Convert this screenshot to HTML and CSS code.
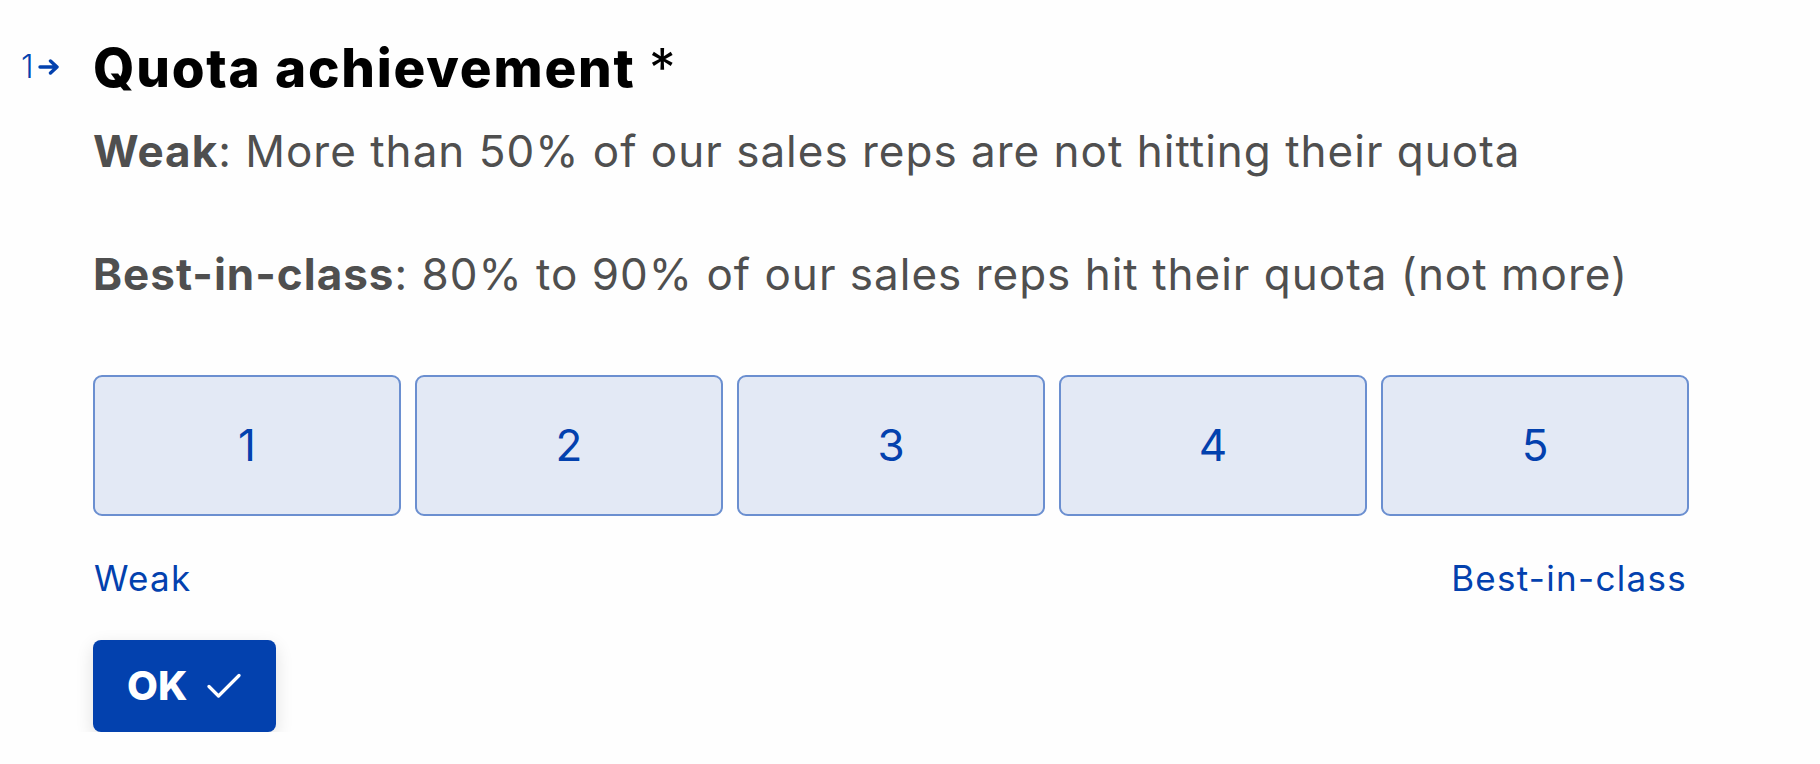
FILE: index.html
```html
<!DOCTYPE html>
<html lang="en">
<head>
<meta charset="utf-8">
<title>Quota achievement</title>
<link rel="stylesheet" href="styles.css">
</head>
<body>
<main class="page">
  <section class="question">
    <div class="qnum">
      <span class="qnum-digit">1</span>
      <svg class="qnum-arrow" viewBox="0 0 22 16" width="22" height="16" aria-hidden="true">
        <path d="M2 8 H19 M12.5 2 L19 8 L12.5 14" fill="none" stroke="currentColor" stroke-width="3.4" stroke-linecap="round" stroke-linejoin="round"/>
      </svg>
    </div>
    <div class="qbody">
      <h1 class="qtitle">Quota achievement <span class="req">*</span></h1>
      <div class="qdesc">
        <p><strong>Weak</strong>: More than 50% of our sales reps are not hitting their quota</p>
        <p><strong>Best-in-class</strong>: 80% to 90% of our sales reps hit their quota (not more)</p>
      </div>
      <div class="scale">
        <button class="scale-btn">1</button>
        <button class="scale-btn">2</button>
        <button class="scale-btn">3</button>
        <button class="scale-btn">4</button>
        <button class="scale-btn">5</button>
      </div>
      <div class="scale-labels">
        <span>Weak</span>
        <span>Best-in-class</span>
      </div>
      <button class="ok-btn">
        <span>OK</span>
        <svg class="ok-check" viewBox="0 0 34 26" width="34" height="26" aria-hidden="true">
          <path d="M2 13.5 L11.5 23 L32 2.5" fill="none" stroke="currentColor" stroke-width="3.2" stroke-linecap="round" stroke-linejoin="round"/>
        </svg>
      </button>
    </div>
  </section>
</main>
</body>
</html>
```
FILE: styles.css
```css
* {
  box-sizing: border-box;
}

html, body {
  margin: 0;
  padding: 0;
  background: #fefefe;
}

body {
  font-family: Inter, "Noto Sans", "DejaVu Sans", sans-serif;
  color: #000;
}

.page {
  padding: 33px 0 0 21px;
}

.question {
  display: flex;
  align-items: flex-start;
}

.qnum {
  width: 72px;
  flex: none;
  display: flex;
  align-items: center;
  gap: 4px;
  margin-top: 19px;
  color: #0341ae;
  height: 30px;
}

.qnum-digit {
  font-size: 32px;
  font-weight: 300;
  line-height: 30px;
}

.qnum-arrow {
  display: block;
}

.qbody {
  width: 1596px;
}

.qtitle {
  margin: 0;
  font-size: 53px;
  font-weight: 800;
  line-height: 70px;
  letter-spacing: 1.8px;
  color: #000;
}

.req {
  font-weight: 400;
}

.qdesc {
  margin-top: 18px;
  color: #4f4f4f;
  font-size: 44px;
  line-height: 61.5px;
  letter-spacing: 1px;
}

.qdesc p {
  margin: 0;
}

.qdesc p + p {
  margin-top: 61.5px;
}

.qdesc strong {
  font-weight: 700;
}

.scale {
  display: flex;
  gap: 14px;
  margin-top: 69px;
}

.scale-btn {
  flex: 1 1 0;
  height: 141px;
  border: 2px solid #6b8fd0;
  border-radius: 9px;
  background: #e3e9f5;
  color: #0341ae;
  font-family: inherit;
  font-size: 44px;
  font-weight: 400;
  padding: 0;
}

.scale-labels {
  display: flex;
  justify-content: space-between;
  color: #0341ae;
  font-size: 35px;
  line-height: 44px;
  letter-spacing: 1.3px;
  margin-top: 40px;
  padding: 0 2px 0 1px;
}

.ok-btn {
  margin-top: 40px;
  display: flex;
  align-items: center;
  gap: 20px;
  height: 92px;
  padding: 0 35px 0 34px;
  border: none;
  border-radius: 8px;
  background: #0341ae;
  color: #fff;
  font-family: inherit;
  font-size: 40px;
  font-weight: 800;
  box-shadow: 0 6px 18px rgba(0, 0, 0, 0.12);
}

.ok-check {
  display: block;
}
```
